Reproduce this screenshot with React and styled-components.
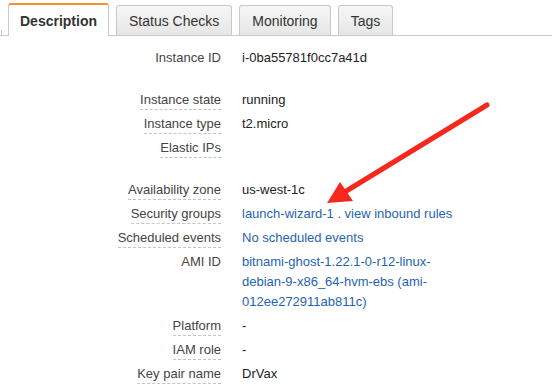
import React from 'react';
import styled, { createGlobalStyle } from 'styled-components';

const GlobalStyle = createGlobalStyle`
  body {
    margin: 0;
    background: #fff;
    font-family: "Liberation Sans", Arial, Helvetica, sans-serif;
  }
`;

const colors = {
  label: '#444',
  value: '#222',
  link: '#1f64b0',
  border: '#c8c8c8',
  accent: '#f0922e',
  arrow: '#f5281e',
};

const Page = styled.div`
  position: relative;
  width: 552px;
  height: 392px;
  overflow: hidden;
`;

const TabBar = styled.div`
  position: relative;
  display: flex;
  align-items: flex-end;
  gap: 7px;
  height: 36px;
  box-sizing: border-box;
  padding-left: 8px;
  border-bottom: 1px solid ${colors.border};
  ::before {
    content: '';
    position: absolute;
    left: 1px;
    bottom: -1px;
    width: 1px;
    height: 6px;
    background: ${colors.border};
  }
`;

const Tab = styled.div`
  display: flex;
  align-items: center;
  box-sizing: border-box;
  font-size: 14px;
  border: 1px solid ${colors.border};
  border-bottom: none;
  border-radius: 3px 3px 0 0;
  cursor: pointer;
  ${p => p.$active ? `
    height: 33px;
    margin-bottom: -1px;
    padding: 0 11px;
    border-top: 2px solid ${colors.accent};
    background: #fff;
    font-weight: bold;
    color: #333;
  ` : `
    height: 30px;
    padding: 0 12px;
    background: linear-gradient(#f6f6f6, #e6e6e6);
    color: #333;
  `}
`;

const Details = styled.div`
  padding-top: 10px;
  font-size: 13px;
  line-height: 20px;
`;

const Row = styled.div`
  display: grid;
  grid-template-columns: 221px 230px;
  column-gap: 20px;
  padding: 2px 0;
  margin-top: ${p => (p.$spaced ? 18 : 0)}px;
`;

const Label = styled.div`
  text-align: right;
  color: ${colors.label};
  span {
    padding-bottom: 2px;
    border-bottom: ${p => (p.$dashed ? `1px dashed #c4c4c4` : 'none')};
  }
`;

const Value = styled.div`
  color: ${p => (p.$link ? colors.link : colors.value)};
  padding-left: 1px;
`;

const Link = styled.a`
  color: ${colors.link};
  text-decoration: none;
  cursor: pointer;
`;

const Arrow = styled.svg`
  position: absolute;
  left: 320px;
  top: 95px;
  pointer-events: none;
`;

const tabs = ['Description', 'Status Checks', 'Monitoring', 'Tags'];

const DetailRow = ({ label, dashed = true, spaced, link, children }) => (
  <Row $spaced={spaced}>
    <Label $dashed={dashed}><span>{label}</span></Label>
    <Value $link={link}>{children}</Value>
  </Row>
);

export default function App() {
  return (
    <Page>
      <GlobalStyle />
      <TabBar>
        {tabs.map((t, i) => (
          <Tab key={t} $active={i === 0}>{t}</Tab>
        ))}
      </TabBar>
      <Details>
        <DetailRow label="Instance ID" dashed={false}>i-0ba55781f0cc7a41d</DetailRow>
        <DetailRow label="Instance state" spaced>running</DetailRow>
        <DetailRow label="Instance type">t2.micro</DetailRow>
        <DetailRow label="Elastic IPs">{'\u00a0'}</DetailRow>
        <DetailRow label="Availability zone" spaced>us-west-1c</DetailRow>
        <DetailRow label="Security groups" link>
          <Link>launch-wizard-1</Link> . <Link>view inbound rules</Link>
        </DetailRow>
        <DetailRow label="Scheduled events" link>
          <Link>No scheduled events</Link>
        </DetailRow>
        <DetailRow label="AMI ID" dashed={false} link>
          bitnami-ghost-1.22.1-0-r12-linux-<br />
          debian-9-x86_64-hvm-ebs (ami-<br />
          012ee272911ab811c)
        </DetailRow>
        <DetailRow label="Platform">-</DetailRow>
        <DetailRow label="IAM role">-</DetailRow>
        <DetailRow label="Key pair name">DrVax</DetailRow>
      </Details>
      <Arrow width="175" height="115" viewBox="320 95 175 115">
        <line x1="487" y1="105" x2="343" y2="193" stroke={colors.arrow} strokeWidth="5" strokeLinecap="round" />
        <polygon points="327,203 340,182 353,201" fill={colors.arrow} />
      </Arrow>
    </Page>
  );
}
